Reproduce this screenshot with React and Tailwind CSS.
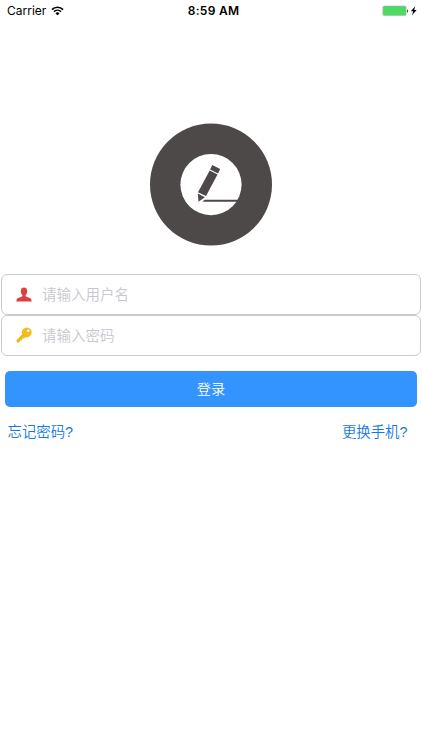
import React, { useState } from "react";

const StatusBar = () => (
  <div className="h-[22px] px-[7px] grid grid-cols-3 items-center text-black font-['Inter','Liberation_Sans',sans-serif]">
    <div className="flex items-center gap-[5px]">
      <span className="text-[12px] leading-none">Carrier</span>
      <svg className="-mt-[1px]" width="13" height="9.5" viewBox="0 0 14 10" fill="none" stroke="#000" strokeWidth="1.8">
        <path d="M1 3.7a8.5 8.5 0 0 1 12 0" />
        <path d="M3.2 6a5.4 5.4 0 0 1 7.6 0" />
        <path d="M7 9.9 4.8 7.7a3.1 3.1 0 0 1 4.4 0z" fill="#000" stroke="none" />
      </svg>
    </div>
    <span className="pl-[5px] text-center text-[12px] leading-none font-semibold tracking-[0.3px]">8:59 AM</span>
    <svg className="justify-self-end -mr-[3px]" width="36" height="12" viewBox="0 0 36 12">
      <rect x="0.9" y="1" width="23.2" height="9.6" rx="1.5" fill="#4cd964" stroke="#a3b5a6" strokeWidth="0.6" />
      <path d="M25 4.2c1.3.4 1.3 3.2 0 3.6z" fill="#333" />
      <path d="M33.2 1.3 28.8 6.3h2.4L30 10.2 34.7 4.9h-2.5z" fill="#000" />
    </svg>
  </div>
);

const Logo = () => (
  <svg className="overflow-visible" width="122" height="122" viewBox="0 0 122 122" fill="#4d4948">
    <circle cx="61" cy="60.6" r="61" />
    <circle cx="61" cy="60.6" r="30.6" fill="#fff" />
    <path d="M62.3 41.1 70.2 45 68 49.4 60.1 45.4z" />
    <path d="M59.7 46.4 67.5 50.4 56 72 48 68.3z" />
    <path d="M47.8 69.5 54.9 73.2 48.5 77.7z" />
    <path d="M52.4 77.8 54.6 75.7H88.4L87.5 77.8H52.4z" />
  </svg>
);

const UserIcon = () => (
  <svg className="relative top-[1px]" width="16" height="15" viewBox="0 0 16 15">
    <path
      d="M8 0.6c2.2 0 3.3 1.5 3.2 3.7-.1 1.8-.7 3-1.6 3.9-.1.8.2 1.2 1 1.6l3.3 1.3c1.2.5 1.7 1.4 1.7 3.3H.4c0-1.9.5-2.8 1.7-3.3l3.3-1.3c.8-.4 1.1-.8 1-1.6-.9-.9-1.5-2.1-1.6-3.9C4.7 2.1 5.8.6 8 .6z"
      fill="#dc4140"
    />
  </svg>
);

const KeyIcon = () => (
  <svg width="16" height="16" viewBox="0 0 16 16">
    <path
      d="M10.6.4a5 5 0 1 1-1.3 9.8L7.8 11.5 6.3 11.6 6 13.2 4.3 13.4 3.8 15.2 1.1 15.6.5 13.2 6.2 7.3A5 5 0 0 1 10.6.4z"
      fill="#f2bd1d"
    />
    <path d="M1 14.3 7.5 7.7" stroke="#e9a61c" strokeWidth="0.8" />
    <circle cx="12.2" cy="3.7" r="1.3" fill="#fff" />
  </svg>
);

const Field = ({ icon, type, placeholder, value, onChange }) => (
  <label className="h-[41px] pl-[14px] pb-[2px] flex items-center border border-[#cbcbcb] rounded-[6px]">
    <span className="w-[16px] mr-[10px] shrink-0">{icon}</span>
    <input
      type={type}
      value={value}
      placeholder={placeholder}
      onChange={(e) => onChange(e.target.value)}
      className="flex-1 min-w-0 h-[30px] text-[14.5px] font-[350] outline-none placeholder:text-[#c7c7cd]"
    />
  </label>
);

const App = () => {
  const [username, setUsername] = useState("");
  const [password, setPassword] = useState("");

  return (
    <div className="min-h-screen bg-white font-['Noto_Sans_CJK_SC',sans-serif]">
      <StatusBar />
      <div className="pt-[102px] flex justify-center">
        <Logo />
      </div>
      <form className="pt-[28px]" onSubmit={(e) => e.preventDefault()}>
        <div className="mx-px">
          <Field icon={<UserIcon />} type="text" placeholder="请输入用户名" value={username} onChange={setUsername} />
          <Field icon={<KeyIcon />} type="password" placeholder="请输入密码" value={password} onChange={setPassword} />
        </div>
        <div className="px-[5px] pt-[15px]">
          <button
            type="submit"
            className="w-full h-[35.5px] pb-[2px] rounded-[5px] bg-[#3393ff] text-white text-[14.2px] font-[350] leading-none"
          >
            登录
          </button>
        </div>
        <div className="pl-[7.5px] pr-[14.5px] pt-[14.5px] flex justify-between text-[14.4px] leading-[22px] font-[350] text-[#1479e6] font-['Liberation_Sans','Noto_Sans_CJK_SC',sans-serif]">
          <a href="#forgot">忘记密码?</a>
          <a href="#phone">更换手机?</a>
        </div>
      </form>
    </div>
  );
};

export default App;
